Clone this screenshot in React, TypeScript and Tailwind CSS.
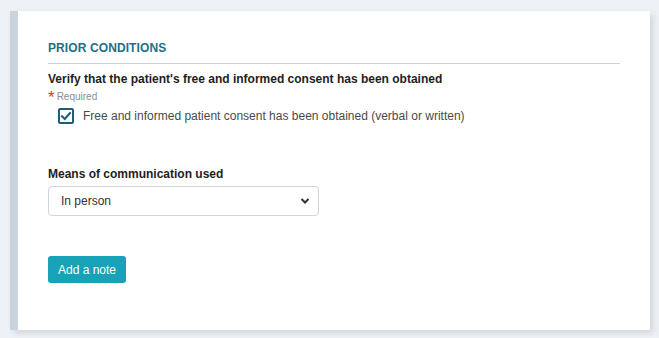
import React from "react";

export default function App() {
  return (
    <div className="w-[659px] h-[338px] bg-[#eef2f7] pt-[11px] pl-[10px]" style={{ fontFamily: '"Liberation Sans", Arial, sans-serif' }}>
      <div className="w-[640px] h-[319px] bg-white border-l-[8px] border-[#c8d3de] shadow-[3px_3px_6px_rgba(0,0,0,0.12)] pl-[30px] pr-[30px] pt-[29px]">
        <div className="border-b border-[#c9d1d9] pb-[7px]">
          <h2 className="text-[12px] leading-[16px] font-bold text-[#1b7088] tracking-[0.1px]">PRIOR CONDITIONS</h2>
        </div>
        <div className="mt-[7px] text-[12px] leading-[16px] font-bold text-[#1e1e1e]">
          Verify that the patient's free and informed consent has been obtained
        </div>
        <div className="mt-[4px] flex items-center h-[12px] text-[10px] leading-[12px] text-[#8a8f95]">
          <span className="relative top-[1px] text-[#e0332c] text-[17px] leading-[12px] h-[12px] mr-[2px]">*</span>
          <span>Required</span>
        </div>
        <label className="mt-[5px] ml-[10px] flex items-center">
          <span className="w-[16px] h-[16px] border-[2px] border-[#1d5e78] rounded-[2px] flex items-center justify-center bg-white">
            <svg width="12" height="12" viewBox="0 0 12 12" fill="none">
              <path d="M2 6.2 L4.8 9 L10 3" stroke="#1d5e78" strokeWidth="2" strokeLinecap="square" />
            </svg>
          </span>
          <span className="ml-[9px] text-[12px] leading-[16px] text-[#4a4a4a]">
            Free and informed patient consent has been obtained (verbal or written)
          </span>
        </label>
        <div className="mt-[42px] text-[12px] leading-[16px] font-bold text-[#1e1e1e]">Means of communication used</div>
        <div className="mt-[4px] w-[271px] h-[30px] border border-[#ced4da] rounded-[4px] flex items-center justify-between pl-[12px] pr-[8px]">
          <span className="text-[12px] text-[#333]">In person</span>
          <svg width="10" height="8" viewBox="0 0 10 8" fill="none">
            <path d="M1.5 2 L5 5.5 L8.5 2" stroke="#333" strokeWidth="2" />
          </svg>
        </div>
        <button className="mt-[40px] w-[78px] h-[27px] rounded-[3px] bg-[#17a2b8] text-white text-[12px] flex items-center justify-center">
          Add a note
        </button>
      </div>
    </div>
  );
}
